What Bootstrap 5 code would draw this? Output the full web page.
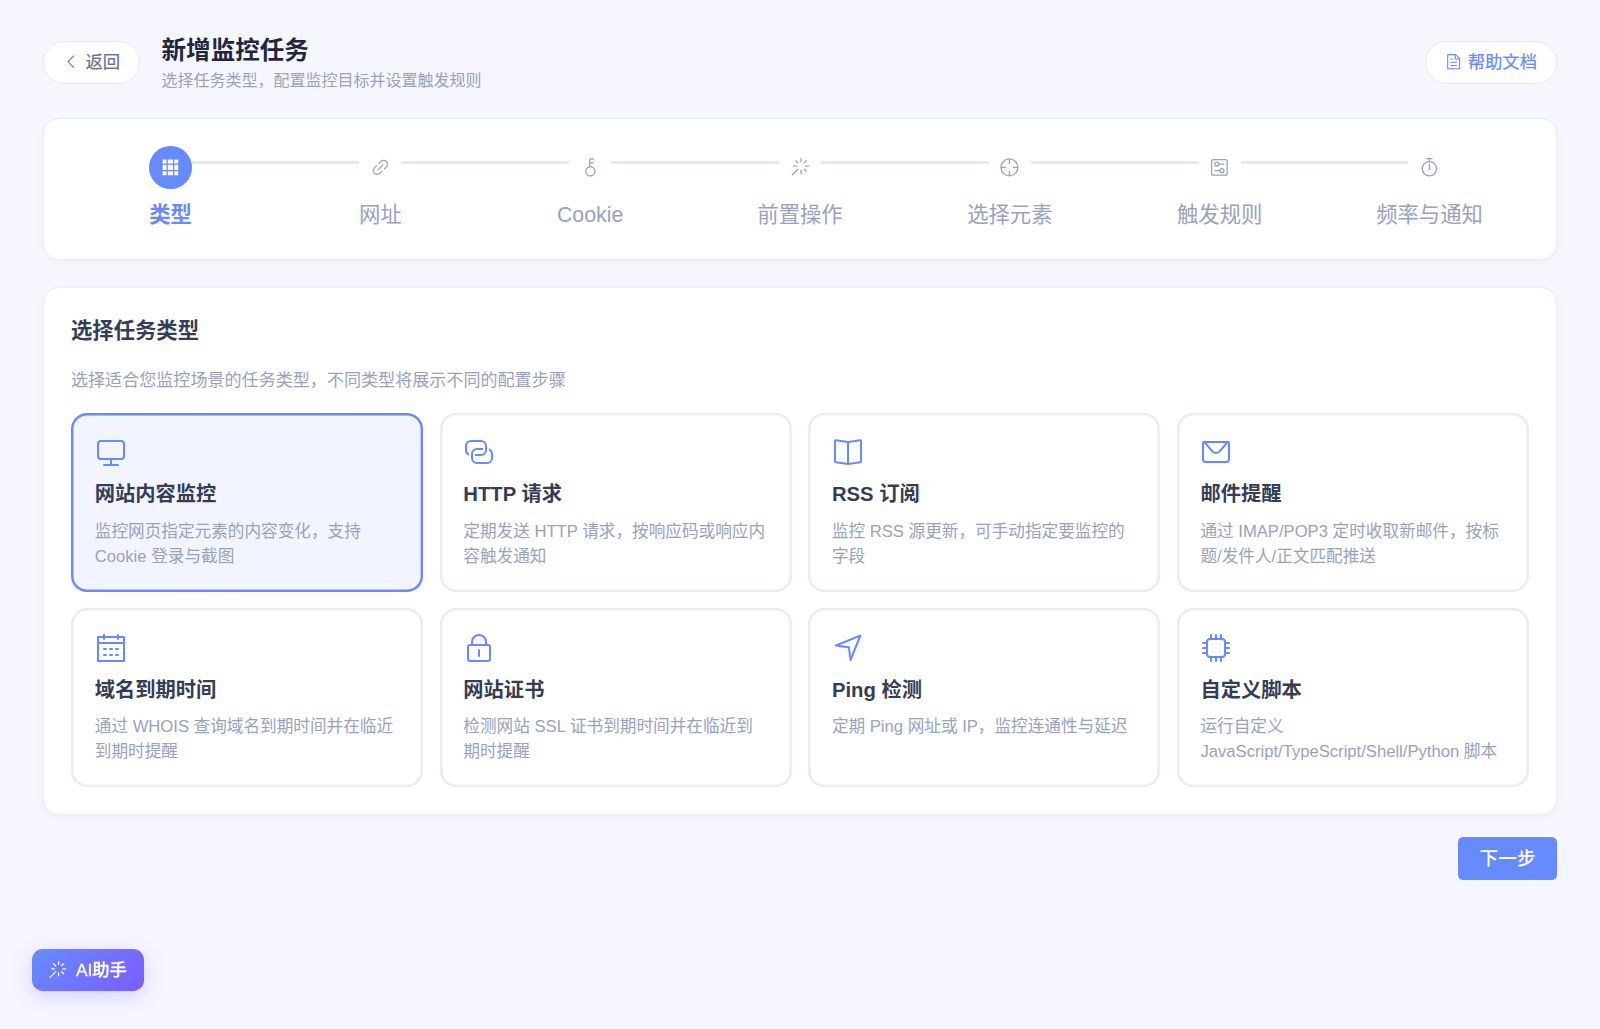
<!DOCTYPE html>
<html lang="zh-CN">
<head>
<meta charset="utf-8">
<meta name="viewport" content="width=device-width, initial-scale=1">
<title>新增监控任务</title>
<link href="https://cdn.jsdelivr.net/npm/bootstrap@5.3.0/dist/css/bootstrap.min.css" rel="stylesheet">
<style>
  :root { --brand:#668aff; --muted:#98a2c0; --ink:#333d55; --line:#e4e8f7; }
  body { background:#f6f6ff; font-family:"Liberation Sans","Noto Sans CJK SC",sans-serif; color:var(--ink); min-height:1029px; line-height:1.5; }
  svg { width:1em; height:1em; fill:currentColor; flex:none; display:block; }
  .page { padding:35px 43px 0 43px; }
  .page-head { height:54px; }
  .pill { height:43px; border:1px solid #e6e8f8; font-size:17.33px; gap:5.4px; color:#68728f; }
  .pill span { padding-top:1px; -webkit-text-stroke:.2px currentColor; }
  .pill-back { width:97px; margin-right:21.6px; }
  .pill-help { width:132px; color:var(--brand); }
  .page-title { font-size:24.53px; font-weight:700; line-height:29px; color:#1f2740; padding-top:2px; }
  .page-sub { font-size:16px; line-height:24px; margin-top:4px; margin-bottom:-2px; color:var(--muted); }
  .panel { background:#fff; border:1px solid #ebebf9; border-radius:16px; box-shadow:0 2px 6px rgba(90,100,190,.06); }
  .steps { margin-top:29px; height:142px; padding:27px 21.6px 0; }
  .step { flex:1 1 0; color:var(--muted); font-size:21.33px; }
  .step-dot { width:42.6px; height:42.6px; font-size:20.8px; }
  .step-row { width:100%; }
  .rail { flex:1; height:3px; margin-bottom:10px; background:var(--line); }
  .rail.off { background:none; }
  .step-label { line-height:32px; margin-top:10px; }
  .step.current { color:var(--brand); font-weight:700; }
  .step.current .step-dot { background:var(--brand); color:#fff; }
  .types { margin-top:27.4px; height:527.6px; padding:26.4px 27px 0 27px; }
  .types h2 { font-size:21.33px; font-weight:700; line-height:32px; margin:0; }
  .types-sub { font-size:17.07px; line-height:26px; margin:21px 0 19px; color:var(--muted); }
  .type-grid { display:grid; grid-template-columns:repeat(4,minmax(0,1fr)); gap:16.2px 16.2px; }
  .type { height:179px; border-radius:16px; padding:23.6px 23.8px 0; box-shadow:inset 0 0 0 2.5px #eaeaf8; }
  .type.chosen { background:#f2f5ff; box-shadow:inset 0 0 0 2.4px var(--brand); }
  .type svg { font-size:32px; color:var(--brand); }
  .type h3 { font-size:20.27px; font-weight:700; line-height:30px; margin:11px 0 9.6px; }
  .type p { font-size:16.64px; line-height:25.3px; margin:0; color:var(--muted); }
  .next { width:98.8px; height:42.6px; margin-top:22.4px; padding:0; border:0; border-radius:5.3px; background:var(--brand); color:#fff; font-size:18.67px; font-weight:500; line-height:41px; }
  .assistant { left:32px; top:948.6px; width:111.8px; height:42.6px; border:0; border-radius:10.7px; color:#fff; font-size:17.33px; font-weight:500; gap:8px; background:linear-gradient(135deg,#668cff,#7c5cff); box-shadow:0 5px 19px rgba(110,100,255,.25); }
  .assistant svg { font-size:20px; margin-left:-1px; }
  .assistant span { padding-top:2px; -webkit-text-stroke:.3px #fff; }
</style>
<script src="https://cdn.jsdelivr.net/npm/bootstrap@5.3.0/dist/js/bootstrap.bundle.min.js"></script>
</head>
<body>
<svg class="d-none">
  <symbol id="i-stick" viewBox="0 0 1024 1024"><path d="M512 64h64v192h-64V64zm0 576h64v192h-64V640zM160 480v-64h192v64H160zm576 0v-64h192v64H736zM249.856 199.04l45.248-45.184L430.848 289.6 385.6 334.848 249.856 199.104zM657.152 606.4l45.248-45.248 135.744 135.744-45.248 45.248L657.152 606.4zM114.048 923.2 68.8 877.952l316.8-316.8 45.248 45.248-316.8 316.8zM702.4 334.848 657.152 289.6l135.744-135.744 45.248 45.248L702.4 334.848z"/></symbol>
</svg>
<main class="page">
  <header class="page-head d-flex align-items-center">
    <a class="pill pill-back rounded-pill bg-white d-flex align-items-center justify-content-center text-decoration-none" href="#">
      <svg viewBox="0 0 1024 1024"><path d="M609.408 149.376 277.76 489.6a32 32 0 0 0 0 44.672l331.648 340.352a29.12 29.12 0 0 0 41.728 0 30.592 30.592 0 0 0 0-42.752L339.264 511.936l311.872-319.872a30.592 30.592 0 0 0 0-42.688 29.12 29.12 0 0 0-41.728 0z"/></svg>
      <span>返回</span>
    </a>
    <div>
      <h1 class="page-title mb-0">新增监控任务</h1>
      <div class="page-sub">选择任务类型，配置监控目标并设置触发规则</div>
    </div>
    <a class="pill pill-help rounded-pill bg-white d-flex align-items-center justify-content-center text-decoration-none ms-auto" href="#">
      <svg viewBox="0 0 1024 1024"><path d="M832 384H576V128H192v768h640V384zm-26.496-64L640 154.496V320h165.504zM160 64h480l256 256v608a32 32 0 0 1-32 32H160a32 32 0 0 1-32-32V96a32 32 0 0 1 32-32zm160 448h384v64H320v-64zm0-192h160v64H320v-64zm0 384h384v64H320v-64z"/></svg>
      <span>帮助文档</span>
    </a>
  </header>

  <nav class="panel steps d-flex align-items-start">
    <div class="step current d-flex flex-column align-items-center">
      <div class="step-row d-flex align-items-center"><i class="rail off"></i><span class="step-dot rounded-circle d-flex align-items-center justify-content-center"><svg viewBox="0 0 1024 1024"><path d="M640 384v256H384V384h256zm64 0h192v256H704V384zm-64 512H384V704h256v192zm64 0V704h192v192H704zm-64-768v192H384V128h256zm64 0h192v192H704V128zM320 384v256H128V384h192zm0 512H128V704h192v192zm0-768v192H128V128h192z"/></svg></span><i class="rail"></i></div>
      <div class="step-label">类型</div>
    </div>
    <div class="step d-flex flex-column align-items-center">
      <div class="step-row d-flex align-items-center"><i class="rail"></i><span class="step-dot d-flex align-items-center justify-content-center"><svg viewBox="0 0 1024 1024"><path d="M715.648 625.152 670.4 579.904l90.496-90.56c75.008-74.944 85.12-186.368 22.656-248.896-62.528-62.464-173.952-52.352-248.96 22.656L444.16 353.6l-45.248-45.248 90.496-90.496c100.032-99.968 251.968-110.08 339.456-22.656 87.488 87.488 77.312 239.424-22.656 339.456l-90.496 90.496zm-90.496 90.496-90.496 90.496C434.624 906.112 282.688 916.224 195.2 828.8c-87.488-87.488-77.312-239.424 22.656-339.456l90.496-90.496 45.248 45.248-90.496 90.56c-75.008 74.944-85.12 186.368-22.656 248.896 62.528 62.464 173.952 52.352 248.96-22.656l90.496-90.496 45.248 45.248zm0-362.048 45.248 45.248L398.848 670.4 353.6 625.152 625.152 353.6z"/></svg></span><i class="rail"></i></div>
      <div class="step-label">网址</div>
    </div>
    <div class="step d-flex flex-column align-items-center">
      <div class="step-row d-flex align-items-center"><i class="rail"></i><span class="step-dot d-flex align-items-center justify-content-center"><svg viewBox="0 0 1024 1024"><path d="M448 456.064V96a32 32 0 0 1 32-32.064L672 64a32 32 0 0 1 0 64H512v128h160a32 32 0 0 1 0 64H512v128a256 256 0 1 1-64 8.064zM512 896a192 192 0 1 0 0-384 192 192 0 0 0 0 384z"/></svg></span><i class="rail"></i></div>
      <div class="step-label">Cookie</div>
    </div>
    <div class="step d-flex flex-column align-items-center">
      <div class="step-row d-flex align-items-center"><i class="rail"></i><span class="step-dot d-flex align-items-center justify-content-center"><svg><use href="#i-stick"/></svg></span><i class="rail"></i></div>
      <div class="step-label">前置操作</div>
    </div>
    <div class="step d-flex flex-column align-items-center">
      <div class="step-row d-flex align-items-center"><i class="rail"></i><span class="step-dot d-flex align-items-center justify-content-center"><svg viewBox="0 0 1024 1024"><path d="M512 896a384 384 0 1 0 0-768 384 384 0 0 0 0 768zm0 64a448 448 0 1 1 0-896 448 448 0 0 1 0 896z"/><path d="M512 96a32 32 0 0 1 32 32v192a32 32 0 0 1-64 0V128a32 32 0 0 1 32-32zm0 576a32 32 0 0 1 32 32v192a32 32 0 1 1-64 0V704a32 32 0 0 1 32-32zM96 512a32 32 0 0 1 32-32h192a32 32 0 0 1 0 64H128a32 32 0 0 1-32-32zm576 0a32 32 0 0 1 32-32h192a32 32 0 1 1 0 64H704a32 32 0 0 1-32-32z"/></svg></span><i class="rail"></i></div>
      <div class="step-label">选择元素</div>
    </div>
    <div class="step d-flex flex-column align-items-center">
      <div class="step-row d-flex align-items-center"><i class="rail"></i><span class="step-dot d-flex align-items-center justify-content-center"><svg viewBox="0 0 1024 1024"><path d="M224 160a64 64 0 0 0-64 64v576a64 64 0 0 0 64 64h576a64 64 0 0 0 64-64V224a64 64 0 0 0-64-64H224zm0-64h576a128 128 0 0 1 128 128v576a128 128 0 0 1-128 128H224A128 128 0 0 1 96 800V224A128 128 0 0 1 224 96z"/><path d="M384 416a64 64 0 1 0 0-128 64 64 0 0 0 0 128zm0 64a128 128 0 1 1 0-256 128 128 0 0 1 0 256z"/><path d="M480 320h256a32 32 0 1 1 0 64H480a32 32 0 0 1 0-64zm160 416a64 64 0 1 0 0-128 64 64 0 0 0 0 128zm0 64a128 128 0 1 1 0-256 128 128 0 0 1 0 256z"/><path d="M288 640h256a32 32 0 1 1 0 64H288a32 32 0 0 1 0-64z"/></svg></span><i class="rail"></i></div>
      <div class="step-label">触发规则</div>
    </div>
    <div class="step d-flex flex-column align-items-center">
      <div class="step-row d-flex align-items-center"><i class="rail"></i><span class="step-dot d-flex align-items-center justify-content-center"><svg viewBox="0 0 1024 1024"><path d="M512 896a320 320 0 1 0 0-640 320 320 0 0 0 0 640zm0 64a384 384 0 1 1 0-768 384 384 0 0 1 0 768z"/><path d="M512 320a32 32 0 0 1 32 32l-.512 224a32 32 0 1 1-64 0L480 352a32 32 0 0 1 32-32z"/><path d="M464 592a48 48 0 1 0 96 0 48 48 0 1 0-96 0zm80-480v100h-64V112h-96a32 32 0 0 1 0-64h256a32 32 0 1 1 0 64h-96z"/></svg></span><i class="rail off"></i></div>
      <div class="step-label">频率与通知</div>
    </div>
  </nav>

  <section class="panel types">
    <h2>选择任务类型</h2>
    <p class="types-sub">选择适合您监控场景的任务类型，不同类型将展示不同的配置步骤</p>
    <div class="type-grid">
      <article class="type chosen">
        <svg viewBox="0 0 1024 1024"><path d="M544 768v128h192a32 32 0 1 1 0 64H288a32 32 0 1 1 0-64h192V768H192A128 128 0 0 1 64 640V256a128 128 0 0 1 128-128h640a128 128 0 0 1 128 128v384a128 128 0 0 1-128 128H544zM192 192a64 64 0 0 0-64 64v384a64 64 0 0 0 64 64h640a64 64 0 0 0 64-64V256a64 64 0 0 0-64-64H192z"/></svg>
        <h3>网站内容监控</h3>
        <p>监控网页指定元素的内容变化，支持 Cookie 登录与截图</p>
      </article>
      <article class="type">
        <svg viewBox="0 0 1024 1024"><path d="M640 384v64H448a128 128 0 0 0-128 128v128a128 128 0 0 0 128 128h320a128 128 0 0 0 128-128V576a128 128 0 0 0-64-110.848V394.88c74.56 26.368 128 97.472 128 181.056v128a192 192 0 0 1-192 192H448a192 192 0 0 1-192-192V576a192 192 0 0 1 192-192h192z"/><path d="M384 640v-64h192a128 128 0 0 0 128-128V320a128 128 0 0 0-128-128H256a128 128 0 0 0-128 128v128a128 128 0 0 0 64 110.848v70.272A192.064 192.064 0 0 1 64 448V320a192 192 0 0 1 192-192h320a192 192 0 0 1 192 192v128a192 192 0 0 1-192 192H384z"/></svg>
        <h3>HTTP 请求</h3>
        <p>定期发送 HTTP 请求，按响应码或响应内容触发通知</p>
      </article>
      <article class="type">
        <svg viewBox="0 0 1024 1024"><path d="M512 863.36l384-54.848v-638.72L525.568 222.72a96 96 0 0 1-27.136 0L128 169.792v638.72l384 54.848zM137.024 106.432l370.432 52.928a32 32 0 0 0 9.088 0l370.432-52.928A64 64 0 0 1 960 169.792v638.72a64 64 0 0 1-54.976 63.36l-388.48 55.488a32 32 0 0 1-9.088 0l-388.48-55.488A64 64 0 0 1 64 808.512v-638.72a64 64 0 0 1 73.024-63.36z"/><path d="M480 192h64v704h-64V192z"/></svg>
        <h3>RSS 订阅</h3>
        <p>监控 RSS 源更新，可手动指定要监控的字段</p>
      </article>
      <article class="type">
        <svg viewBox="0 0 1024 1024"><path d="M128 224v512a64 64 0 0 0 64 64h640a64 64 0 0 0 64-64V224H128zm0-64h768a64 64 0 0 1 64 64v512a128 128 0 0 1-128 128H192A128 128 0 0 1 64 736V224a64 64 0 0 1 64-64z"/><path d="M904 224 656.512 506.88a192 192 0 0 1-289.024 0L120 224h784zm-698.944 0 210.56 240.704a128 128 0 0 0 192.704 0L818.944 224H205.056z"/></svg>
        <h3>邮件提醒</h3>
        <p>通过 IMAP/POP3 定时收取新邮件，按标题/发件人/正文匹配推送</p>
      </article>
      <article class="type">
        <svg viewBox="0 0 1024 1024"><path d="M128 384v512h768V192H768v32a32 32 0 1 1-64 0v-32H320v32a32 32 0 0 1-64 0v-32H128v128h768v64H128zm192-256h384V96a32 32 0 1 1 64 0v32h160a32 32 0 0 1 32 32v768a32 32 0 0 1-32 32H96a32 32 0 0 1-32-32V160a32 32 0 0 1 32-32h160V96a32 32 0 0 1 64 0v32zm-32 384h64a32 32 0 0 1 0 64h-64a32 32 0 0 1 0-64zm0 192h64a32 32 0 1 1 0 64h-64a32 32 0 1 1 0-64zm192-192h64a32 32 0 0 1 0 64h-64a32 32 0 0 1 0-64zm0 192h64a32 32 0 1 1 0 64h-64a32 32 0 1 1 0-64zm192-192h64a32 32 0 1 1 0 64h-64a32 32 0 1 1 0-64zm0 192h64a32 32 0 1 1 0 64h-64a32 32 0 1 1 0-64z"/></svg>
        <h3>域名到期时间</h3>
        <p>通过 WHOIS 查询域名到期时间并在临近到期时提醒</p>
      </article>
      <article class="type">
        <svg viewBox="0 0 1024 1024"><path d="M224 448a32 32 0 0 0-32 32v384a32 32 0 0 0 32 32h576a32 32 0 0 0 32-32V480a32 32 0 0 0-32-32H224zm0-64h576a96 96 0 0 1 96 96v384a96 96 0 0 1-96 96H224a96 96 0 0 1-96-96V480a96 96 0 0 1 96-96z"/><path d="M512 544a32 32 0 0 1 32 32v192a32 32 0 1 1-64 0V576a32 32 0 0 1 32-32zm192-160v-64a192 192 0 1 0-384 0v64h384zM512 64a256 256 0 0 1 256 256v128H256V320A256 256 0 0 1 512 64z"/></svg>
        <h3>网站证书</h3>
        <p>检测网站 SSL 证书到期时间并在临近到期时提醒</p>
      </article>
      <article class="type">
        <svg viewBox="0 0 1024 1024"><path d="m249.6 417.088 319.744 43.072 39.168 310.272L845.12 178.88 249.6 417.088zm-129.024 47.168a32 32 0 0 1-7.68-61.44l777.792-311.04a32 32 0 0 1 41.6 41.6l-310.336 775.68a32 32 0 0 1-61.44-7.808L512 516.992l-391.424-52.736z"/></svg>
        <h3>Ping 检测</h3>
        <p>定期 Ping 网址或 IP，监控连通性与延迟</p>
      </article>
      <article class="type">
        <svg viewBox="0 0 1024 1024"><path d="M320 256a64 64 0 0 0-64 64v384a64 64 0 0 0 64 64h384a64 64 0 0 0 64-64V320a64 64 0 0 0-64-64H320zm0-64h384a128 128 0 0 1 128 128v384a128 128 0 0 1-128 128H320a128 128 0 0 1-128-128V320a128 128 0 0 1 128-128z"/><path fill="none" stroke="currentColor" stroke-width="64" stroke-linecap="round" d="M352 96v112M512 96v112M672 96v112M352 816v112M512 816v112M672 816v112M96 352h112M96 512h112M96 672h112M816 352h112M816 512h112M816 672h112"/></svg>
        <h3>自定义脚本</h3>
        <p>运行自定义 JavaScript/TypeScript/Shell/Python 脚本</p>
      </article>
    </div>
  </section>

  <div class="d-flex justify-content-end">
    <button class="btn next" type="button">下一步</button>
  </div>
</main>
<button class="assistant position-fixed d-flex align-items-center justify-content-center p-0" type="button">
  <svg><use href="#i-stick"/></svg><span>AI助手</span>
</button>
</body>
</html>
